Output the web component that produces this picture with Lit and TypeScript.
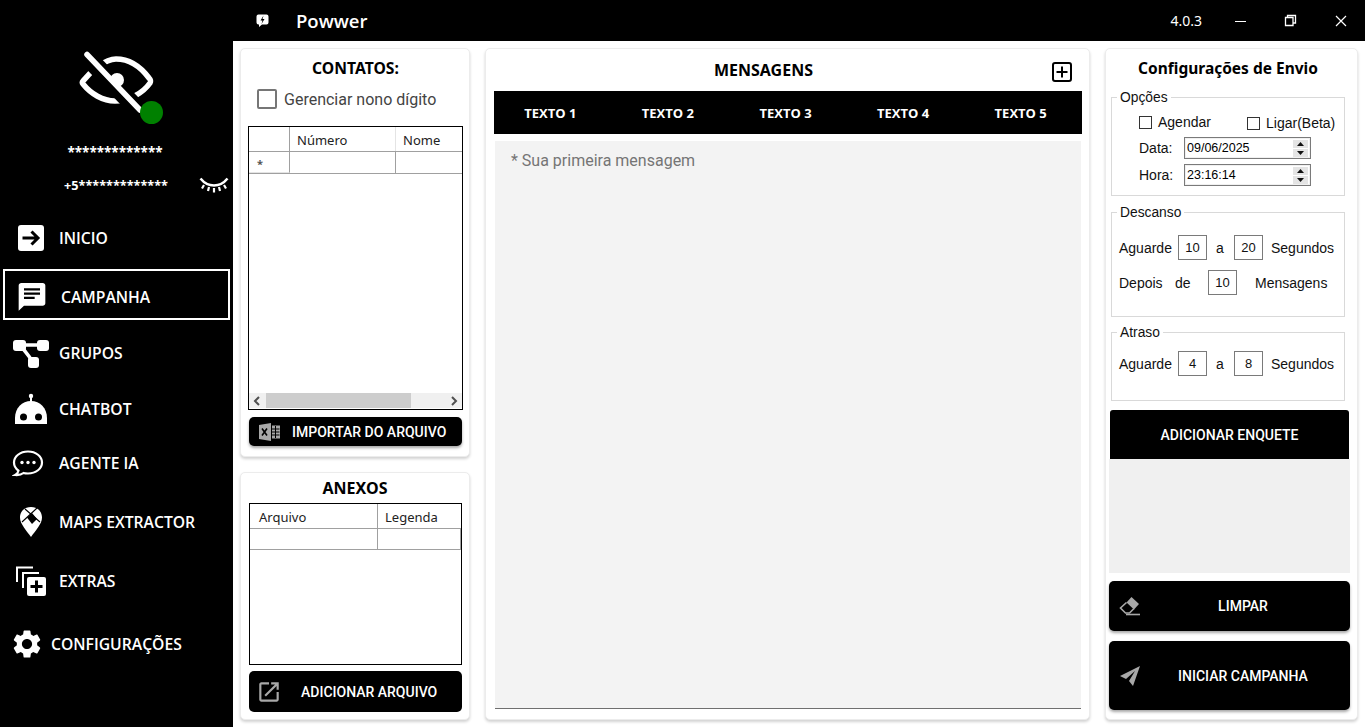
import { LitElement, html, css, svg } from "lit";
import { customElement } from "lit/decorators.js";

const icons: Record<string, any> = {
  inicio: svg`<svg class="ic" width="30" height="30" viewBox="0 0 30 30"><rect x="2" y="2" width="26" height="26" rx="3" fill="#fff"/><path d="M6.5 15H22M15.5 8.5L22 15l-6.5 6.5" fill="none" stroke="#000" stroke-width="3"/></svg>`,
  campanha: svg`<svg class="ic" width="32" height="32" viewBox="0 0 24 24"><path fill="#fff" d="M20 2H4c-1.1 0-1.99.9-1.99 2L2 24l4-4h14c1.1 0 2-.9 2-2V4c0-1.1-.9-2-2-2z" transform="translate(0 -.4) scale(1 .95)"/><path d="M6 5.5h12v1.6H6zM6 8.7h12v1.6H6zM6 11.9h8v1.6H6z" fill="#000"/></svg>`,
  grupos: svg`<svg class="ic" width="38" height="32" viewBox="0 0 38 32"><path d="M8 8h26M10 10c3 5 7 8 10 14" stroke="#fff" stroke-width="3.500" fill="none"/><rect x="1" y="3" width="13" height="11" rx="3" fill="#fff"/><rect x="25" y="3" width="12" height="11" rx="3" fill="#fff"/><rect x="16" y="20" width="11" height="11" rx="3" fill="#fff"/></svg>`,
  chatbot: svg`<svg class="ic" width="34" height="32" viewBox="0 0 34 32"><circle cx="17" cy="3" r="2.2" fill="#fff"/><rect x="16" y="4" width="2" height="5" fill="#fff"/><path d="M1 31v-6C1 15 8 8 17 8s16 7 16 17v6z" fill="#fff"/><circle cx="9.500" cy="24" r="3.500" fill="#000"/><circle cx="24.500" cy="24" r="3.500" fill="#000"/></svg>`,
  agente: svg`<svg class="ic" width="32" height="28" viewBox="0 0 32 28"><path d="M16 2.500C8 2.500 2 7.500 2 13.500c0 3.300 1.800 6.200 4.500 8.200-.3 1.900-1.500 3.300-3.300 4.300 3 .2 6.600-.6 8.300-2 1.400.4 3 .5 4.500.5 8 0 14-5 14-11S24 2.500 16 2.500z" fill="none" stroke="#fff" stroke-width="2.200"/><circle cx="10" cy="13.500" r="1.700" fill="#fff"/><circle cx="16" cy="13.500" r="1.700" fill="#fff"/><circle cx="22" cy="13.500" r="1.700" fill="#fff"/></svg>`,
  maps: svg`<svg class="ic" width="24" height="32" viewBox="0 0 24 32"><path d="M12 1C5.500 1 1 5.500 1 11.500c0 6.500 6.500 13 11 19.500 4.500-6.500 11-13 11-19.500C23 5.500 18.500 1 12 1z" fill="#fff"/><path d="M8 11.500L13 7l5 6-5 5z" fill="#000"/><path d="M6 3l15 13M18 2L3 16" stroke="#000" stroke-width="1.100"/></svg>`,
  extras: svg`<svg class="ic" width="32" height="32" viewBox="0 0 32 32"><path d="M2 17V2.500h16" fill="none" stroke="#fff" stroke-width="2"/><path d="M8 23V8h16" fill="none" stroke="#fff" stroke-width="2"/><rect x="12" y="12" width="19" height="19" rx="2" fill="#fff"/><path d="M21.500 15.500v12M15.500 21.500h12" stroke="#000" stroke-width="3"/></svg>`,
  config: svg`<svg class="ic" width="34" height="34" viewBox="0 0 24 24"><path fill="#fff" d="M19.14 12.94c.04-.3.06-.61.06-.94 0-.32-.02-.64-.07-.94l2.03-1.58c.18-.14.23-.41.12-.61l-1.92-3.32c-.12-.22-.37-.29-.59-.22l-2.39.96c-.5-.38-1.03-.7-1.62-.94l-.36-2.54c-.04-.24-.24-.41-.48-.41h-3.84c-.24 0-.43.17-.47.41l-.36 2.54c-.59.24-1.13.57-1.62.94l-2.39-.96c-.22-.08-.47 0-.59.22L2.74 8.87c-.12.21-.08.47.12.61l2.03 1.58c-.05.3-.09.63-.09.94s.02.64.07.94l-2.03 1.58c-.18.14-.23.41-.12.61l1.92 3.32c.12.22.37.29.59.22l2.39-.96c.5.38 1.03.7 1.62.94l.36 2.54c.05.24.24.41.48.41h3.84c.24 0 .44-.17.47-.41l.36-2.54c.59-.24 1.13-.56 1.62-.94l2.39.96c.22.08.47 0 .59-.22l1.92-3.32c.12-.22.07-.47-.12-.61l-2.01-1.58zM12 15.6c-1.98 0-3.6-1.62-3.6-3.6s1.62-3.6 3.6-3.6 3.6 1.62 3.6 3.6-1.62 3.6-3.6 3.6z"/></svg>`,
};

const nav = [
  { k: "inicio", t: "INICIO" },
  { k: "campanha", t: "CAMPANHA" },
  { k: "grupos", t: "GRUPOS" },
  { k: "chatbot", t: "CHATBOT" },
  { k: "agente", t: "AGENTE IA" },
  { k: "maps", t: "MAPS EXTRACTOR" },
  { k: "extras", t: "EXTRAS" },
  { k: "config", t: "CONFIGURAÇÕES" },
];

const spin = svg`<svg class="spin" width="15" height="17" viewBox="0 0 15 17"><rect width="15" height="8" fill="#e4e4e4"/><rect y="9" width="15" height="8" fill="#e4e4e4"/><path d="M7.500 2L11 6H4z" fill="#111"/><path d="M7.500 15L11 11H4z" fill="#111"/></svg>`;

@customElement("app-root")
export class AppRoot extends LitElement {
  static styles = css`
    :host { display: block; width: 1365px; height: 727px; overflow: hidden; background: #000; font-family: "Liberation Sans", Arial, sans-serif; }
    * { box-sizing: border-box; }
    .app { display: grid; grid-template-columns: 233px 1fr; height: 727px; }
    .side { background: #000; color: #fff; display: flex; flex-direction: column; font-family: "Open Sans", sans-serif; }
    .avatar { position: relative; height: 64px; width: 90px; margin: 48px 0 0 78px; }
    .dot { position: absolute; left: 62px; top: 53px; width: 23px; height: 23px; border-radius: 50%; background: #008000; }
    .stars { text-align: center; font-size: 13.500px; font-weight: 700; line-height: 18px; margin: 31px 3px 0 0; font-family: "Noto Sans", sans-serif; }
    .phone { display: flex; align-items: center; height: 24px; margin: 12px 0 0 64px; font-size: 12.700px; font-weight: 700; font-family: "Noto Sans", sans-serif; }
    .phone svg { margin-left: 31px; }
    .nav { display: flex; flex-direction: column; }
    .row { display: flex; align-items: center; height: 40px; font-size: 15.700px; font-weight: 600; white-space: nowrap; }
    .ic { flex: none; }
    .r-inicio { margin-top: 21px; padding-left: 16px; gap: 13px; }
    .r-campanha { margin: 11px 3px 0 3px; height: 51px; border: 2px solid #fff; padding: 4px 0 0 11px; gap: 13px; width: 227px; }
    .r-grupos { margin-top: 13px; padding-left: 12px; gap: 9px; }
    .r-chatbot { margin-top: 16px; padding-left: 14px; gap: 11px; }
    .r-agente { margin-top: 14px; padding-left: 12px; gap: 15px; }
    .r-maps { margin-top: 19px; padding-left: 19px; gap: 16px; }
    .r-extras { margin-top: 19px; padding-left: 15px; gap: 12px; }
    .r-config { margin-top: 23px; padding-left: 10px; gap: 7px; }

    .main { display: flex; flex-direction: column; min-width: 0; }
    .top { height: 41px; flex: none; display: flex; align-items: center; color: #fff; background: #000; }
    .logo { margin-left: 23px; }
    .brand { margin-left: 27px; font: 600 18.500px "Open Sans", sans-serif; }
    .ver { margin-left: auto; font: 400 14px "Noto Sans", sans-serif; }
    .wbtn { display: flex; margin-left: 37px; }
    .wbtn.first { margin-left: 33px; }
    .wbtn.last { margin: 0 18px 0 38px; }
    .content { flex: 1; background: #fff; display: flex; padding: 7px; gap: 15px; min-height: 0; }
    .card { background: #fff; border: 1px solid #ececec; border-radius: 5px; box-shadow: 0 2px 3px rgba(0,0,0,.18); }
    .col1 { width: 230px; flex: none; display: flex; flex-direction: column; gap: 15px; }
    .contatos { height: 409px; padding: 0 6px 0 7px; display: flex; flex-direction: column; flex: none; }
    .anexos { flex: 1; padding: 0 7px; display: flex; flex-direction: column; }
    .h { font: 700 16px "Noto Sans", sans-serif; color: #000; text-align: center; }
    .contatos .h { font-size: 15.700px; line-height: 20px; margin-top: 9px; }
    .nono { display: flex; align-items: center; gap: 7px; margin: 11px 0 0 9px; font: 400 16px Roboto, sans-serif; color: #444; height: 20px; }
    .nono i { display: block; width: 20px; height: 20px; border: 2px solid #767676; border-radius: 2px; }
    .grid { border: 1px solid #000; position: relative; background: #fff; font: 400 13px "Noto Sans", sans-serif; color: #222; overflow: hidden; display: flex; flex-direction: column; }
    .contatos .grid { height: 284px; margin-top: 17px; }
    .tr { display: grid; flex: none; }
    .c1 { grid-template-columns: 41px 106px 1fr; }
    .tr.head { height: 24px; }
    .tr.body { height: 23px; border-top: 1px solid #a0a0a0; border-bottom: 1px solid #a0a0a0; }
    .tr > div { border-right: 1px solid #a0a0a0; padding-left: 7px; line-height: 27px; overflow: hidden; }
    .head > div + div { border-right-color: #e4e4e4; }
    .tr > div:last-child { border-right: none; }
    .tr > .star { padding-left: 8px; font: 700 11px "Noto Sans", sans-serif; color: #555; line-height: 24px; }
    .sbody > div:first-child { border-bottom: 1px solid #e4e4e4; }
    .scroll { margin-top: auto; margin-bottom: 1px; height: 15px; background: #f0f0f0; display: flex; align-items: center; justify-content: space-between; position: relative; padding: 0 4px; }
    .thumb { position: absolute; left: 17px; width: 145px; top: 0; bottom: 0; background: #cdcdcd; }
    .btn { display: flex; align-items: center; background: #000; color: #fff; border-radius: 5px; font: 500 14px Roboto, sans-serif; box-shadow: 0 2px 3px rgba(0,0,0,.35); flex: none; }
    .b-imp { height: 29px; margin-top: 7px; padding-left: 10px; width: 213px; margin-left: 1px; }
    .b-imp span { margin-left: 12px; }
    .anexos .h { line-height: 20px; margin-top: 5px; }
    .anexos .grid { height: 162px; margin-top: 5px; margin-left: 1px; width: 213px; }
    .c2 { grid-template-columns: 128px 1fr; }
    .tr.c2 > div { padding-left: 9px; }
    .tr.c2 > div + div { padding-left: 7px; }
    .anexos .tr.head { height: 24px; }
    .anexos .tr.body { height: 22px; border-right: 1px solid #a0a0a0; }
    .b-add { height: 41px; margin-top: 6px; padding-left: 7px; width: 213px; margin-left: 1px; box-shadow: none; }
    .b-add span { margin-left: 19px; }

    .msg { width: 605px; flex: none; padding: 0 8px 10px 8px; display: flex; flex-direction: column; }
    .msg-head { display: flex; align-items: center; justify-content: center; position: relative; height: 42px; flex: none; }
    .msg-head .h { margin-right: 48px; }
    .plus { position: absolute; left: 558px; top: 13px; }
    .tabs { display: grid; grid-template-columns: repeat(5, 1fr); height: 43px; background: #000; color: #fff; flex: none; width: 588px; }
    .tabs div { display: flex; align-items: center; justify-content: center; padding-right: 5px; font: 700 13px "Open Sans", sans-serif; }
    .area { flex: 1; margin-top: 7px; background: #f3f3f3; border-bottom: 1px solid #6f6f6f; color: #757575; font: 400 16px Roboto, sans-serif; padding: 10px 16px; width: 586px; margin-left: 1px; }

    .cfg { flex: 1; padding: 0 5px 9px 4px; display: flex; flex-direction: column; color: #111; font: 400 14px "Liberation Sans", sans-serif; min-width: 0; }
    .cfg .t { font: 700 15.500px "Noto Sans", sans-serif; text-align: center; line-height: 20px; margin: 9px 0 0 0; width: 236px; color: #000; white-space: nowrap; }
    fieldset { margin: 0 0 0 1px; width: 234px; border: 1px solid #d9d9d9; padding: 0 7px; min-width: 0; flex: none; position: relative; }
    legend { margin-left: -2px; padding: 0 3px; font-size: 13.800px; line-height: 15px; height: 15px; }
    .f1 { height: 106px; margin-top: 12px; }
    .f2 { height: 112px; margin-top: 9px; }
    .f3 { height: 76px; margin-top: 8px; }
    .f1 .checks { display: flex; align-items: center; height: 18px; margin: 8px 0 0 20px; }
    .cb { width: 13px; height: 13px; border: 1px solid #333; background: #fff; flex: none; }
    .checks .a { margin-left: 6px; width: 89px; }
    .checks .l { margin-left: 6px; position: relative; top: 1px; }
    .checks .cb2 { position: relative; top: 1px; }
    .dt { display: flex; align-items: center; height: 22px; margin: 5px 0 0 20px; }
    .checks + .dt { margin-top: 6px; }
    .dt .lb { width: 45px; }
    .dbox { width: 127px; height: 22px; border: 1px solid #7a7a7a; box-shadow: inset 0 0 0 1px #f0f0f0; display: flex; align-items: center; padding: 0 2px 0 2px; background: #fff; font-size: 12.500px; justify-content: space-between; color: #000; }
    .spin { flex: none; }
    .ln { display: flex; align-items: center; height: 25px; white-space: nowrap; }
    .f2 .ln.l1 { margin-top: 15px; }
    .f2 .ln.l2 { margin-top: 10px; }
    .f3 .ln.l1 { margin-top: 11px; }
    .num { width: 29px; height: 25px; border: 1px solid #7a7a7a; display: flex; align-items: center; justify-content: center; font-size: 13px; flex: none; }
    .ag { width: 59px; }
    .a2 { width: 27px; padding-left: 9px; }
    .seg { margin-left: 8px; }
    .dp { width: 56px; }
    .de { width: 33px; }
    .msgs { margin-left: 18px; }
    .b-enq { height: 49px; margin-top: 9px; width: 239px; margin-left: 0; justify-content: center; box-shadow: none; border-radius: 3px 3px 0 0; }
    .gray { height: 114px; background: #f0f0f0; width: 241px; margin-left: -1px; flex: none; }
    .b-lim { height: 50px; width: 241px; margin: 8px 0 0 -1px; position: relative; justify-content: center; padding-left: 27px; }
    .b-ini { height: 69px; width: 241px; margin: 10px 0 0 -1px; position: relative; justify-content: center; padding-left: 27px; }
    .bi { position: absolute; left: 10px; top: 50%; transform: translateY(-50%); }
  `;

  render() {
    return html`<div class="app">
      <aside class="side">
        <div class="avatar">
          <svg width="78" height="68" viewBox="0 0 78 68">
            <path d="M5 33c-1 1-1 2 0 3 8 10 20 17 32 17 14 0 28-8 35-18 1-2 1-3-1-5C62 18 50 11 38 11 27 11 13 23 5 33z" fill="none" stroke="#fff" stroke-width="5.500" stroke-linejoin="round"/>
            <path d="M9 6.500L62 62" stroke="#000" stroke-width="15"/>
            <circle cx="39" cy="32" r="7" fill="#fff"/>
            <path d="M4 10L60 68" stroke="#000" stroke-width="9"/>
            <path d="M9 6.500L62 62" stroke="#fff" stroke-width="5.500" stroke-linecap="round"/>
          </svg>
          <div class="dot"></div>
        </div>
        <div class="stars">*************</div>
        <div class="phone">+5*************
          <svg width="30" height="16" viewBox="0 0 30 16"><path d="M1.500 1.500c4 5 8.500 7 13.500 7s9.500-2 13.500-7" fill="none" stroke="#fff" stroke-width="2.500"/><path d="M5 8L3 11.500M10 10l-1 4M15 11v4.500M20 10l1 4M25 8l2 3.500" stroke="#fff" stroke-width="2.200"/></svg>
        </div>
        <nav class="nav">
          ${nav.map((n) => html`<div class="row r-${n.k}">${icons[n.k]}<span>${n.t}</span></div>`)}
        </nav>
      </aside>
      <div class="main">
        <header class="top">
          <svg class="logo" width="13" height="13" viewBox="0 0 13 13"><path d="M2.500 0.500h8a2 2 0 0 1 2 2v6a2 2 0 0 1-2 2H6L3 13v-2.500H2.500a2 2 0 0 1-2-2v-6a2 2 0 0 1 2-2z" fill="#fff"/><path d="M7.500 1.500L4.500 6.500H6.500L5.500 10L8.500 5H6.500z" fill="#000"/></svg>
          <span class="brand">Powwer</span>
          <span class="ver">4.0.3</span>
          <span class="wbtn first"><svg width="12" height="12" viewBox="0 0 12 12"><path d="M0 6.500h11" stroke="#fff"/></svg></span>
          <span class="wbtn"><svg width="13" height="13" viewBox="0 0 13 13"><path d="M1.500 3.500h7.500v8H1.500zM3.500 3.500V1.500h8v7.500H9" fill="none" stroke="#fff" stroke-width="1.300"/></svg></span>
          <span class="wbtn last"><svg width="12" height="12" viewBox="0 0 12 12"><path d="M1 1l10 10M11 1L1 11" stroke="#fff" stroke-width="1.200"/></svg></span>
        </header>
        <div class="content">
          <div class="col1">
            <section class="card contatos">
              <div class="h">CONTATOS:</div>
              <label class="nono"><i></i>Gerenciar nono dígito</label>
              <div class="grid">
                <div class="tr c1 head"><div></div><div>Número</div><div>Nome</div></div>
                <div class="tr c1 body sbody"><div class="star">*</div><div></div><div></div></div>
                <div class="scroll">
                  <div class="thumb"></div>
                  <svg width="8" height="10" viewBox="0 0 8 10"><path d="M6 1L2 5l4 4" fill="none" stroke="#505050" stroke-width="2"/></svg>
                  <svg width="8" height="10" viewBox="0 0 8 10"><path d="M2 1l4 4-4 4" fill="none" stroke="#505050" stroke-width="2"/></svg>
                </div>
              </div>
              <div class="btn b-imp">
                <svg width="21" height="18" viewBox="0 0 21 18"><path d="M0 2l12-2v18L0 16z" fill="#a8a8a8"/><path d="M3 5.500l5 7M8 5.500l-5 7" stroke="#000" stroke-width="1.600"/><path d="M13 2.500h8v13h-8zM13 6h3v2h-3zM17 6h3v2h-3z" fill="#a8a8a8"/><path d="M13 6h7.500M13 9h7.500M13 12h7.500M16.500 3v12" stroke="#000"/></svg>
                <span>IMPORTAR DO ARQUIVO</span>
              </div>
            </section>
            <section class="card anexos">
              <div class="h">ANEXOS</div>
              <div class="grid">
                <div class="tr c2 head"><div>Arquivo</div><div>Legenda</div></div>
                <div class="tr c2 body"><div></div><div></div></div>
              </div>
              <div class="btn b-add">
                <svg width="26" height="26" viewBox="0 0 24 24"><path fill="#a8a8a8" d="M19 19H5V5h7V3H5c-1.110 0-2 .9-2 2v14c0 1.100.89 2 2 2h14c1.100 0 2-.9 2-2v-7h-2v7zM14 3v2h3.590l-9.830 9.830 1.410 1.410L19 6.410V10h2V3h-7z"/></svg>
                <span>ADICIONAR ARQUIVO</span>
              </div>
            </section>
          </div>
          <section class="card msg">
            <div class="msg-head">
              <div class="h">MENSAGENS</div>
              <svg class="plus" width="20" height="20" viewBox="0 0 20 20"><rect x="1" y="1" width="18" height="18" rx="2" fill="none" stroke="#000" stroke-width="2"/><path d="M10 4.500v11M4.500 10h11" stroke="#000" stroke-width="2"/></svg>
            </div>
            <div class="tabs"><div>TEXTO 1</div><div>TEXTO 2</div><div>TEXTO 3</div><div>TEXTO 4</div><div>TEXTO 5</div></div>
            <div class="area">* Sua primeira mensagem</div>
          </section>
          <section class="card cfg">
            <div class="t">Configurações de Envio</div>
            <fieldset class="f1">
              <legend>Opções</legend>
              <div class="checks"><span class="cb"></span><span class="a">Agendar</span><span class="cb cb2"></span><span class="l">Ligar(Beta)</span></div>
              <div class="dt"><span class="lb">Data:</span><div class="dbox">09/06/2025${spin}</div></div>
              <div class="dt"><span class="lb">Hora:</span><div class="dbox">23:16:14${spin}</div></div>
            </fieldset>
            <fieldset class="f2">
              <legend>Descanso</legend>
              <div class="ln l1"><span class="ag">Aguarde</span><span class="num">10</span><span class="a2">a</span><span class="num">20</span><span class="seg">Segundos</span></div>
              <div class="ln l2"><span class="dp">Depois</span><span class="de">de</span><span class="num">10</span><span class="msgs">Mensagens</span></div>
            </fieldset>
            <fieldset class="f3">
              <legend>Atraso</legend>
              <div class="ln l1"><span class="ag">Aguarde</span><span class="num">4</span><span class="a2">a</span><span class="num">8</span><span class="seg">Segundos</span></div>
            </fieldset>
            <div class="btn b-enq">ADICIONAR ENQUETE</div>
            <div class="gray"></div>
            <div class="btn b-lim">
              <svg class="bi" width="22" height="22" viewBox="0 0 22 22"><path d="M12.500 2L20 9l-5 5.500-7.500-7z" fill="#a8a8a8"/><path d="M7.500 7.500L1.500 13l5 5h4l4.500-4.500" fill="none" stroke="#a8a8a8" stroke-width="1.600"/><path d="M7 19.500h14" stroke="#a8a8a8" stroke-width="1.600"/></svg>
              LIMPAR
            </div>
            <div class="btn b-ini">
              <svg class="bi" width="22" height="22" viewBox="0 0 22 22"><path d="M21 1L1 11l6 3 9-8-6 10 4 5z" fill="#a8a8a8"/></svg>
              INICIAR CAMPANHA
            </div>
          </section>
        </div>
      </div>
    </div>`;
  }
}
